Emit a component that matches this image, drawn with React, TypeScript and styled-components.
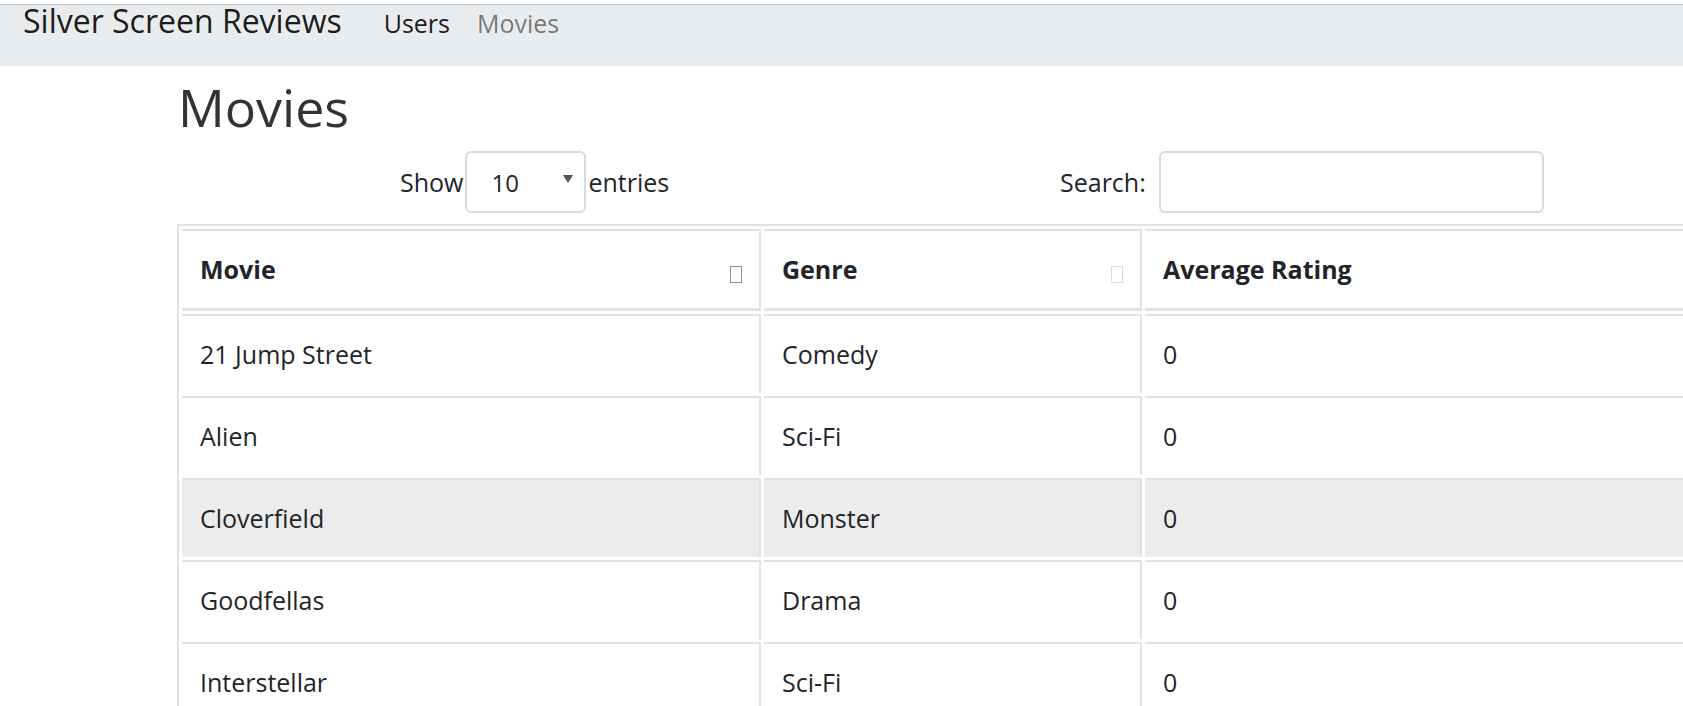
import React from 'react';
import styled, { createGlobalStyle } from 'styled-components';

interface Movie {
    title: string;
    genre: string;
    rating: number;
}

const movies: Movie[] = [
    { title: '21 Jump Street', genre: 'Comedy', rating: 0 },
    { title: 'Alien', genre: 'Sci-Fi', rating: 0 },
    { title: 'Cloverfield', genre: 'Monster', rating: 0 },
    { title: 'Goodfellas', genre: 'Drama', rating: 0 },
    { title: 'Interstellar', genre: 'Sci-Fi', rating: 0 },
];

const GlobalStyle = createGlobalStyle`
    * { box-sizing: border-box; }
    body {
        margin: 0;
        overflow-x: hidden;
        background: #fff;
        color: #212529;
        font-family: "Open Sans", "Noto Sans", sans-serif;
    }
`

const Page = styled.div`
    padding-top: 4px;
`

const Navbar = styled.nav`
    display: flex;
    align-items: baseline;
    height: 62px;
    padding-left: 23px;
    background: #e9ecef;
    border-top: 1px solid #c4c4c4;
`
const Brand = styled.span`
    font-size: 32px;
    line-height: 1;
    color: rgba(0, 0, 0, 0.9);
    margin-right: 42px;
`
const NavLink = styled.span<{ $active?: boolean }>`
    font-size: 25px;
    line-height: 1;
    margin-right: 27px;
    color: ${p => (p.$active ? 'rgba(0, 0, 0, 0.5)' : 'rgba(0, 0, 0, 0.9)')};
`

const Container = styled.main`
    padding-left: 177px;
`
const Heading = styled.h1`
    margin: 10px 0 13px 1px;
    font-size: 52px;
    line-height: 62px;
    font-weight: 400;
    color: #333;
`

const Controls = styled.div`
    display: grid;
    grid-template-columns: 883px auto;
    align-items: center;
    height: 62px;
    font-size: 25px;
`
const Length = styled.div`
    display: flex;
    align-items: center;
    padding-left: 223px;
    gap: 2px;
`
const SelectBox = styled.div`
    display: flex;
    align-items: center;
    width: 121px;
    height: 62px;
    padding: 0 11px 0 24px;
    border: 2px solid #d5dadf;
    border-radius: 6px;
    font-size: 24px;
`
const Caret = styled.span`
    margin-left: auto;
    margin-bottom: 6px;
    border-left: 5px solid transparent;
    border-right: 5px solid transparent;
    border-top: 8px solid #555;
`
const Filter = styled.label`
    display: flex;
    align-items: center;
    gap: 13px;
`
const SearchInput = styled.input`
    width: 385px;
    height: 62px;
    border: 2px solid #d5dadf;
    border-radius: 6px;
    font: inherit;
    padding: 0 16px;
    outline: none;
`

const Table = styled.table`
    margin-top: 11px;
    width: 1540px;
    table-layout: fixed;
    border-collapse: separate;
    border-spacing: 3px;
    border-top: 2px solid #dee2e6;
    border-left: 2px solid #dee2e6;
    font-size: 25px;
    line-height: 38px;
`
const HeadCell = styled.th`
    position: relative;
    text-align: left;
    font-weight: 700;
    padding: 19px 30px 20px 18px;
    border-top: 2px solid #dee2e6;
    border-right: 2px solid #dee2e6;
    border-bottom: 3px solid #dee2e6;
`
const SortMark = styled.span<{ $dim?: boolean }>`
    position: absolute;
    right: 17px;
    top: 35px;
    width: 12px;
    height: 17px;
    border: 1px solid ${p => (p.$dim ? '#dcdcdc' : '#8f8f8f')};
`
const Row = styled.tr<{ $hover?: boolean }>`
    background: ${p => (p.$hover ? '#ececec' : 'transparent')};
`
const Cell = styled.td`
    padding: 19px 18px 20px;
    border-top: 2px solid #dee2e6;
    border-right: 2px solid #dee2e6;
`

const App: React.FC = () => {
    return (
        <Page>
            <GlobalStyle />
            <Navbar>
                <Brand>Silver Screen Reviews</Brand>
                <NavLink>Users</NavLink>
                <NavLink $active>Movies</NavLink>
            </Navbar>
            <Container>
                <Heading>Movies</Heading>
                <Controls>
                    <Length>
                        Show
                        <SelectBox>
                            10
                            <Caret />
                        </SelectBox>
                        entries
                    </Length>
                    <Filter>
                        Search:
                        <SearchInput type="search" />
                    </Filter>
                </Controls>
                <Table>
                    <colgroup>
                        <col style={{ width: 579 }} />
                        <col style={{ width: 378 }} />
                        <col />
                    </colgroup>
                    <thead>
                        <tr>
                            <HeadCell>
                                Movie
                                <SortMark />
                            </HeadCell>
                            <HeadCell>
                                Genre
                                <SortMark $dim />
                            </HeadCell>
                            <HeadCell>
                                Average Rating
                                <SortMark $dim />
                            </HeadCell>
                        </tr>
                    </thead>
                    <tbody>
                        {movies.map((m, i) => (
                            <Row key={m.title} $hover={i === 2}>
                                <Cell>{m.title}</Cell>
                                <Cell>{m.genre}</Cell>
                                <Cell>{m.rating}</Cell>
                            </Row>
                        ))}
                    </tbody>
                </Table>
            </Container>
        </Page>
    );
};

export default App;
